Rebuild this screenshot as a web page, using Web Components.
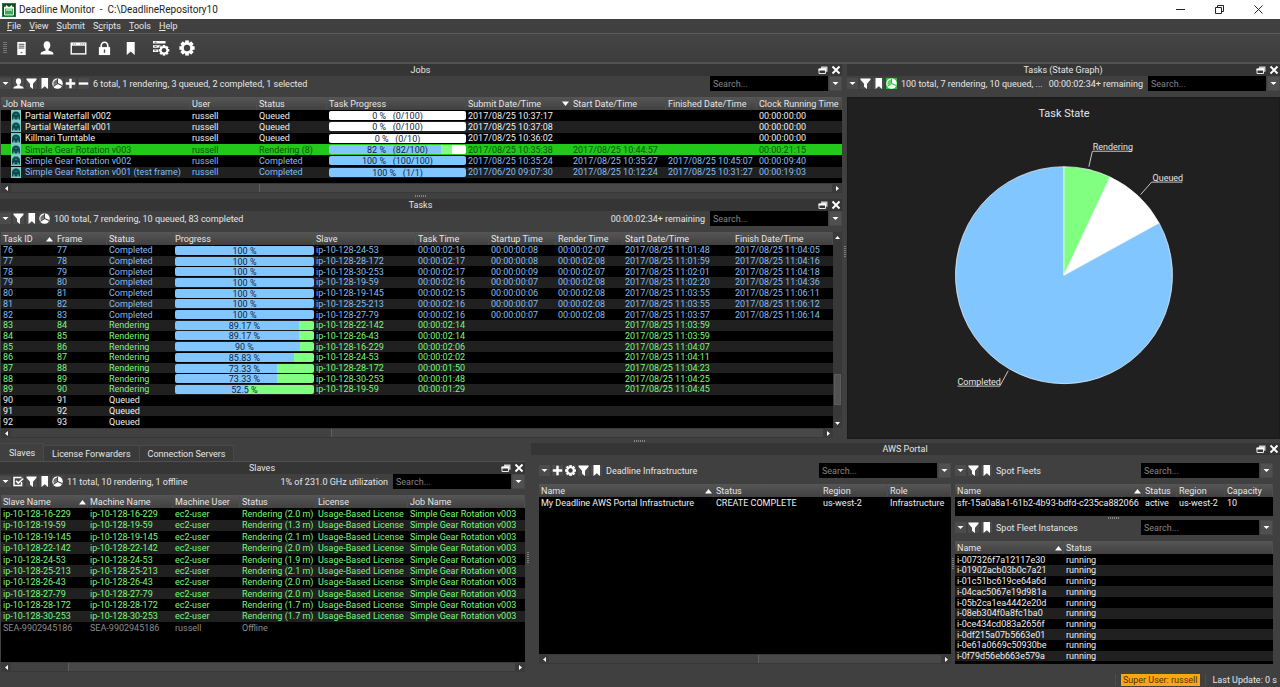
<!DOCTYPE html>
<html lang="en">
<head>
<meta charset="utf-8">
<title>Deadline Monitor</title>
<style>
  html, body { margin: 0; height: 100%; }
  body { background: #404040; color: #e6e6e6; font: 9px/10px Roboto, "Liberation Sans", sans-serif; }
</style>
</head>
<body>
<monitor-app></monitor-app>
<script>
const BASE = `
  * { box-sizing: border-box; }
  button { all: unset; box-sizing: border-box; display: inline-flex; align-items: center; justify-content: center; cursor: default; }
  svg { display: block; }
`;

const gear = (cx, cy, r, hole) => {
  let teeth = '';
  for (let a = 0; a < 360; a += 45) {
    teeth += `<rect x="${cx - r * 0.24}" y="${cy - r}" width="${r * 0.48}" height="${r}" transform="rotate(${a} ${cx} ${cy})"/>`;
  }
  return `${teeth}<circle cx="${cx}" cy="${cy}" r="${r * 0.8}"/><circle cx="${cx}" cy="${cy}" r="${hole}" fill="#404040"/>`;
};

const ICONS = {
  down: ['0 0 11 11', '<path d="M2.500 4h6L5.500 7z"/>'],
  user: ['0 0 14 14', '<ellipse cx="7" cy="4.200" rx="3.300" ry="4"/><path d="M5.500 7h3v2.500l4 1.500q1 .6 1 2.500h-13q0-1.900 1-2.500l4-1.500z"/>'],
  funnel: ['0 0 11 11', '<path d="M.5.500h10v1.300L7 5.800V11L4 8.800v-3L.5 1.800z"/>'],
  bookmark: ['0 0 11 11', '<path d="M2.500 0h6.500v11L5.800 8.200 2.500 11z"/>'],
  pie: ['0 0 11 11', '<circle cx="5.500" cy="5.500" r="5.200"/><path d="M5.500.6V5.500L10 7.600M5.500 5.500L1.400 8.400" stroke="var(--cut,#404040)" stroke-width="1.100" fill="none"/><path d="M5 1.400V5L1.900 7.300A4 4 0 0 1 5 1.400z" fill="var(--cut,#404040)" opacity=".75"/>'],
  plus: ['0 0 11 11', '<path d="M4.300.8h2.400v3.500h3.500v2.400H6.700v3.500H4.300V6.700H.8V4.300h3.500z"/>'],
  minus: ['0 0 11 11', '<path d="M.8 4.400h9.400v2.300H.8z"/>'],
  gear: ['0 0 11 11', gear(5.5, 5.5, 5.4, 2.2)],
  check: ['0 0 11 11', '<path d="M8.500 6v3.500h-7.500v-8h7.500" fill="none" stroke="#fff" stroke-width="1.500"/><path d="M3 4.800l2.200 2.300 5-4.600" fill="none" stroke="#fff" stroke-width="1.600"/>'],
  float: ['0 0 10 10', '<path d="M3 1.500h6.500v5.200H8V4H3z" fill="#ccc"/><path d="M1 4.200h6.500v4.300H1z" fill="none" stroke="#e8e8e8"/><path d="M.5 3.500h7.500v2H.5z"/>'],
  close: ['0 0 10 10', '<path d="M1.500 1.500l7 7m0-7l-7 7" stroke="#fff" stroke-width="1.900" fill="none"/>'],
  server: ['0 0 16 16', '<path d="M3.500 1h9v14h-9z"/><path d="M5 3.500h6M5 5.500h6M5 7.500h6" stroke="#444" fill="none"/><path d="M7 12h2v1H7z" fill="#444"/>'],
  window: ['0 0 18 16', '<path d="M.5 1.500h17v13H.5z"/><path d="M2 5h14v8H2z" fill="#404040"/><path d="M11 3.200h1M13 3.200h1M15 3.200h1M3 3.200h1M5 3.200h1" stroke="#444" stroke-width="1"/>'],
  lock: ['0 0 16 16', '<path d="M4.500 7V5a3.500 3.700 0 0 1 7 0v2" fill="none" stroke="#fff" stroke-width="1.800"/><path d="M2 6.500h12V15H2z"/><path d="M7.300 9h1.400v3.500H7.300z" fill="#444"/>'],
  mark: ['0 0 16 16', '<path d="M4 1h8.500v14L8.200 11.200 4 15z"/>'],
  config: ['0 0 18 16', `<path d="M1 1h12.500v2.600H1zM1 5.200h10v2.600H1zM1 9.400h6v2.600H1z"/><path d="M2.500 2.300h2M2.500 6.500h2M2.500 10.700h2" stroke="#444" stroke-width=".8"/><circle cx="12" cy="10.300" r="6" fill="#404040"/>${gear(12, 10.300, 5.300, 2.300)}`],
  cog: ['0 0 16 16', gear(8, 8, 7.6, 3.2)],
};
const icon = (name, w = 11, h = w) =>
  `<svg width="${w}" height="${h}" viewBox="${ICONS[name][0]}" fill="#fff" aria-hidden="true">${ICONS[name][1]}</svg>`;

function define(name, css, html, setup) {
  customElements.define(name, class extends HTMLElement {
    connectedCallback() {
      if (this.shadowRoot) return;
      const root = this.attachShadow({ mode: 'open' });
      const t = document.createElement('template');
      t.innerHTML = `<style>${BASE}${css}</style>` + (typeof html === 'function' ? html(this) : html);
      root.append(t.content.cloneNode(true));
      if (setup) setup(this, root);
    }
  });
}

/* ---------- window chrome ---------- */
define('title-bar', `
  :host { display: flex; align-items: center; height: 19px; padding: 0 2px; background: #fff; color: #222; font-size: 10px; }
  .name { margin-left: 3px; flex: 1; white-space: pre; line-height: 19px; }
  button { width: 39px; height: 19px; }
`, `
  <svg width="14" height="14" viewBox="0 0 14 14"><rect width="14" height="14" fill="#1f7a3c"/><rect x="1" y="1" width="12" height="12" fill="#0d4a22"/><path d="M2.500 5h9v7h-9z" fill="#3ea85b" stroke="#e9fff0"/><path d="M4 2.500L6 4.500M10 2.500L8 4.500M2 4.500h10" stroke="#e9fff0" stroke-width="1.300"/><path d="M4 6.500h6v1H4z" fill="#fff"/></svg>
  <span class="name">Deadline Monitor  -  C:\\DeadlineRepository10</span>
  <button aria-label="Minimize"><svg width="9" height="9" stroke="#222"><path d="M0 4.500h9"/></svg></button>
  <button aria-label="Restore"><svg width="9" height="9" fill="none" stroke="#222"><path d="M.5 2.500h6v6h-6zM2.500 2.500v-2h6v6h-2"/></svg></button>
  <button aria-label="Close"><svg width="9" height="9" stroke="#222"><path d="M.5.500l8 8m0-8l-8 8"/></svg></button>
`);

define('menu-bar', `
  :host { display: flex; align-items: center; gap: 8px; height: 15px; padding-left: 7px; border-bottom: 1px solid #5c5c5c; background: #404040; }
  u { text-underline-offset: 1px; }
`, ['File', 'View', 'Submit', 'Scripts', 'Tools', 'Help'].map(m => {
  const i = m === 'Scripts' ? 1 : 0;
  return `<button><span>${m.slice(0, i)}<u>${m[i]}</u>${m.slice(i + 1)}</span></button>`;
}).join(''));

define('main-tools', `
  :host { display: flex; align-items: center; height: 30px; padding-left: 3px; border-bottom: 2px solid #525252; background: linear-gradient(#444, #3d3d3d); }
  i { width: 4px; height: 12px; margin-right: 1px; background: repeating-linear-gradient(#777 0 1px, transparent 1px 2px); }
  button { width: 26px; height: 24px; }
  .gap { margin-left: 5px; }
`, `<i></i>
  <button aria-label="Repository">${icon('server', 15)}</button>
  <button aria-label="User">${icon('user', 14)}</button>
  <button class="gap" aria-label="Panels">${icon('window', 17, 15)}</button>
  <button aria-label="Super user">${icon('lock', 15)}</button>
  <button aria-label="Bookmark">${icon('mark', 15)}</button>
  <button class="gap" aria-label="Configure repository">${icon('config', 18, 16)}</button>
  <button aria-label="Options">${icon('cog', 16)}</button>
`);

/* ---------- docks ---------- */
define('dock-title', `
  :host { display: grid; grid-template-columns: 1fr auto 1fr; align-items: center; height: 12px; padding-right: 1px; background: #353535; }
  .btns { display: flex; gap: 3px; justify-content: flex-end; grid-column: 3; }
  span { grid-column: 2; }
`, `<span><slot></slot></span><div class="btns"><button aria-label="Float">${icon('float', 10)}</button><button aria-label="Close">${icon('close', 10)}</button></div>`);

define('panel-tools', `
  :host { display: flex; align-items: center; height: 15px; margin-bottom: 6px; white-space: nowrap; }
  .icons { display: flex; gap: 2px; margin-right: 4px; }
  .icons button { width: 11px; height: 11px; background: #4b4b4b; }
  .icons button.on { background: #2fbf3a; --cut: #2fbf3a; }
  .sum { flex: 1; min-width: 0; overflow: hidden; }
  .right { margin-right: 5px; }
  input { width: 118px; height: 15px; margin: 0 1px 0 0; padding: 0 3px; border: 0; border-radius: 0; background: #000; color: #e6e6e6; font: inherit; outline: none; }
  input::placeholder { color: #858585; opacity: 1; }
  .drop { width: 13px; height: 15px; background: #505050; border: 1px solid #484848; }
`, el => `
  <div class="icons">${el.getAttribute('icons').split(' ').map(n => {
    const on = n.endsWith('!'); n = n.replace('!', '');
    return `<button class="${on ? 'on' : ''}" aria-label="${n}">${icon(n)}</button>`;
  }).join('')}</div>
  <span class="sum"><slot></slot></span>
  <span class="right">${el.getAttribute('right') || ''}</span>
  <input type="text" placeholder="Search..." aria-label="Search">
  <button class="drop" aria-label="Search options">${icon('down')}</button>
`);

define('scroll-strip', `
  :host { display: flex; height: 10px; background: #444; }
  :host([vertical]) { flex-direction: column; width: 9px; height: auto; }
  button { flex: none; width: 10px; height: 10px; background: #3a3a3a; }
  :host([vertical]) button { width: 9px; }
  .track { flex: 1; display: flex; background: #484848; border: solid #383838; border-width: 1px 0; }
  :host([vertical]) .track { flex-direction: column; background: #383838; border-width: 0 1px; }
  .thumb { background: #414141; border-right: 1px solid #606060; }
  :host([vertical]) .thumb { background: #525252; border: 1px solid #5c5c5c; }
`, el => {
  const [a, b, c] = el.getAttribute('parts').split(' ');
  const v = el.hasAttribute('vertical');
  const tri = d => `<svg width="7" height="7" fill="#fff"><path d="${d}"/></svg>`;
  return `<button aria-label="Scroll back">${tri(v ? 'M1 5h5L3.500 2z' : 'M5 1v5L2 3.500z')}</button>
    <div class="track"><div style="flex:${a}"></div><div class="thumb" style="flex:${b}"></div><div style="flex:${c}"></div></div>
    <button aria-label="Scroll forward">${tri(v ? 'M1 2h5L3.500 5z' : 'M2 1v5L5 3.500z')}</button>`;
});

define('split-grip', `
  :host { display: flex; align-items: center; justify-content: center; }
  i { width: 12px; height: 2px; background: repeating-linear-gradient(90deg, #858585 0 1px, transparent 1px 2px); }
  :host([vertical]) i { width: 2px; height: 12px; background: repeating-linear-gradient(#7c7c7c 0 1px, transparent 1px 2px); }
`, '<i></i>');

/* ---------- data ---------- */
const bar = (text, stops) => ({ text, stops });
const B = '#82c6ff', G = '#80ff80', W = '#ffffff';
const gradient = (p, q = 100) => `linear-gradient(90deg, ${B} ${p}%, ${G} ${p}% ${q}%, ${W} ${q}%)`;

const T = {};
T.jobs = {
  cols: [['Job Name', 189], ['User', 67], ['Status', 70], ['Task Progress', 139], ['Submit Date/Time', 105, 'desc'], ['Start Date/Time', 95], ['Finished Date/Time', 91], ['Clock Running Time']],
  icon: true,
  rows: [
    ['q', 'Partial Waterfall v002', 'russell', 'Queued', bar('0 %   (0/100)', W), '2017/08/25 10:37:17', '', '', '00:00:00:00'],
    ['q', 'Partial Waterfall v001', 'russell', 'Queued', bar('0 %   (0/100)', W), '2017/08/25 10:37:08', '', '', '00:00:00:00'],
    ['q', 'Killmari Turntable', 'russell', 'Queued', bar('0 %   (0/10)', W), '2017/08/25 10:36:02', '', '', '00:00:00:00'],
    ['sel', 'Simple Gear Rotation v003', 'russell', 'Rendering (8)', bar('82 %   (82/100)', gradient(82, 90)), '2017/08/25 10:35:38', '2017/08/25 10:44:57', '', '00:00:21:15'],
    ['c', 'Simple Gear Rotation v002', 'russell', 'Completed', bar('100 %   (100/100)', B), '2017/08/25 10:35:24', '2017/08/25 10:35:27', '2017/08/25 10:45:07', '00:00:09:40'],
    ['c', 'Simple Gear Rotation v001 (test frame)', 'russell', 'Completed', bar('100 %   (1/1)', B), '2017/06/20 09:07:30', '2017/08/25 10:12:24', '2017/08/25 10:31:27', '00:00:19:03'],
  ],
};
const done = [
  ['24-53', '16', '08', '07', '01:48', '04:05'], ['28-172', '17', '08', '08', '01:59', '04:16'],
  ['30-253', '17', '09', '07', '02:01', '04:18'], ['19-59', '16', '07', '08', '02:20', '04:36'],
  ['19-145', '15', '06', '08', '03:55', '06:11'], ['25-213', '16', '07', '08', '03:55', '06:12'],
  ['27-79', '16', '07', '08', '03:57', '06:14'],
];
const live = [
  ['89.17', '22-142', '02:14', '03:59'], ['89.17', '26-43', '02:14', '03:59'], ['90', '16-229', '02:06', '04:07'],
  ['85.83', '24-53', '02:02', '04:11'], ['73.33', '28-172', '01:50', '04:23'], ['73.33', '30-253', '01:48', '04:25'],
  ['52.5', '19-59', '01:29', '04:45'],
];
T.tasks = {
  cols: [['Task ID', 54, 'asc'], ['Frame', 52], ['Status', 66], ['Progress', 141], ['Slave', 102], ['Task Time', 73], ['Startup Time', 67], ['Render Time', 67], ['Start Date/Time', 110], ['Finish Date/Time']],
  rows: [
    ...done.map((d, i) => ['c', 76 + i, 77 + i, 'Completed', bar('100 %', B), `ip-10-128-${d[0]}`, `00:00:02:${d[1]}`, `00:00:00:${d[2]}`, `00:00:02:${d[3]}`, `2017/08/25 11:${d[4]}`, `2017/08/25 11:${d[5]}`]),
    ...live.map((d, i) => ['r', 83 + i, 84 + i, 'Rendering', bar(`${d[0]} %`, gradient(d[0])), `ip-10-128-${d[1]}`, `00:00:${d[2]}`, '', '', `2017/08/25 11:${d[3]}`, '']),
    ...[90, 91, 92].map(n => ['q', n, n + 1, 'Queued', '', '', '', '', '', '', '']),
  ],
};
T.slaves = {
  cols: [['Slave Name', 87, 'asc'], ['Machine Name', 85], ['Machine User', 67], ['Status', 76], ['License', 92], ['Job Name']],
  rows: [
    ...[['16-229', '2.0'], ['19-59', '1.3'], ['19-145', '2.1'], ['22-142', '2.0'], ['24-53', '1.9'], ['25-213', '2.1'], ['26-43', '2.0'], ['27-79', '2.0'], ['28-172', '1.7'], ['30-253', '1.7']]
      .map(([n, m]) => ['r', `ip-10-128-${n}`, `ip-10-128-${n}`, 'ec2-user', `Rendering (${m} m)`, 'Usage-Based License', 'Simple Gear Rotation v003']),
    ['off', 'SEA-9902945186', 'SEA-9902945186', 'russell', 'Offline', '', ''],
  ],
};
T.infra = {
  cols: [['Name', 175, 'asc'], ['Status', 107], ['Region', 67], ['Role']],
  rows: [['q', 'My Deadline AWS Portal Infrastructure', 'CREATE COMPLETE', 'us-west-2', 'Infrastructure']],
};
T.fleets = {
  cols: [['Name', 188, 'asc'], ['Status', 34], ['Region', 48], ['Capacity']],
  rows: [['q', 'sfr-15a0a8a1-61b2-4b93-bdfd-c235ca882066', 'active', 'us-west-2', '10']],
};
T.instances = {
  cols: [['Name', 109, 'asc'], ['Status']],
  rows: ['007326f7a12117e30', '01902acb03b0c7a21', '01c51bc619ce64a6d', '04cac5067e19d981a', '05b2ca1ea4442e20d', '08eb304f0a8fc1ba0', '0ce434cd083a2656f', '0df215a07b5663e01', '0e61a0669c50930be', '0f79d56eb663e579a']
    .map(n => ['q', `i-${n}`, 'running']),
};

const jobIcon = '<svg width="10" height="11" viewBox="0 0 10 11"><rect width="10" height="11" fill="#7fcac6"/><path d="M1 9.500V6q0-4.500 4-4.500t4 4.500v3.500H7.500V7.500h-1v2h-3v-2h-1v2z" fill="#0c4a4e"/><path d="M3.500 3.500L5 5l1.500-1.500" stroke="#1f8a8a" fill="none"/></svg>';

define('data-table', `
  :host { display: block; background: #000; overflow: hidden; }
  table { width: 100%; height: var(--table-height, auto); table-layout: fixed; border-collapse: separate; border-spacing: 0; }
  th, td { padding: 0 0 0 2px; white-space: nowrap; text-align: left; font-weight: 400; vertical-align: middle; }
  th { height: 13px; background: linear-gradient(#565656, #404040); border-right: 1px solid #4e4e4e; }
  th div { display: flex; align-items: center; justify-content: space-between; }
  tr:nth-child(even) td { background: #202020; }
  .q { color: #f0f0f0; } .c { color: #82bdf0; } .r { color: #7cf57c; } .off { color: #8c8c8c; }
  tbody .sel td { color: #0b540b; background: #22c81a; }
  .job { display: flex; align-items: center; gap: 4px; height: 11px; padding-left: 8px; }
  .bar { height: 9px; border-radius: 2px; color: #12283a; text-align: center; line-height: 11px; white-space: pre; overflow: hidden; }
`, el => {
  const t = T[el.getAttribute('source')];
  const arrow = k => k ? `<svg width="8" height="6" fill="#fff"><path d="${k === 'asc' ? 'M0 5.500h7L3.500 1z' : 'M0 .5h7L3.500 5z'}"/></svg>` : '';
  const cell = (c, i) => c && c.stops ? `<td><div class="bar" style="background:${c.stops}">${c.text}</div></td>`
    : t.icon && i === 0 ? `<td><div class="job">${jobIcon}${c}</div></td>` : `<td>${c}</td>`;
  return `<table><colgroup>${t.cols.map(c => `<col${c[1] ? ` style="width:${c[1]}px"` : ''}>`).join('')}</colgroup>
    <thead><tr>${t.cols.map(c => `<th scope="col"><div>${c[0]}${arrow(c[2])}</div></th>`).join('')}</tr></thead>
    <tbody>${t.rows.map(([cls, ...cells]) => `<tr class="${cls}">${cells.map(cell).join('')}</tr>`).join('')}</tbody></table>`;
});

/* ---------- chart ---------- */
define('state-chart', `
  :host { display: flex; background: #202020; border: 1px solid #1a1a1a; min-height: 0; }
  svg { width: 100%; height: 100%; }
  text { fill: #e6e6e6; }
`, () => {
  const cx = 217, cy = 178, r = 109;
  const pt = p => [cx + r * Math.sin(p * 2 * Math.PI), cy - r * Math.cos(p * 2 * Math.PI)].map(n => n.toFixed(1)).join(' ');
  const slice = (a, b, f) => `<path d="M${cx} ${cy}L${pt(a)}A${r} ${r} 0 ${b - a > .5 ? 1 : 0} 1 ${pt(b)}z" fill="${f}" stroke="#f4faff" stroke-width=".7"/>`;
  return `<svg viewBox="0 0 433 342" role="img" aria-label="Task State">
    ${slice(.17, 1, B)}${slice(0, .07, G)}${slice(.07, .17, W)}
    <g fill="none" stroke="#c8c8c8" stroke-width="1">
      <path d="M242 69L245.500 53.500H285"/><path d="M294 97L305 84.500H336"/><path d="M161 274L152.500 289.500H110"/>
    </g>
    <text x="217" y="19" font-size="11" text-anchor="middle">Task State</text>
    <text x="246" y="52" font-size="9">Rendering</text>
    <text x="306" y="83" font-size="9">Queued</text>
    <text x="110" y="288" font-size="9">Completed</text>
  </svg>`;
});

define('tab-strip', `
  :host { display: flex; align-items: flex-end; height: 19px; padding-left: 1px; border-bottom: 1px solid #505050; }
  button { height: 16px; padding: 0 8px; border: 1px solid #4a4a4a; border-bottom: 0; border-left: 0; background: #3a3a3a; }
  button[aria-selected=true] { height: 18px; background: #404040; }
`, `<button role="tab" aria-selected="true">Slaves</button><button role="tab" aria-selected="false">License Forwarders</button><button role="tab" aria-selected="false">Connection Servers</button>`);

define('status-bar', `
  :host { display: flex; align-items: center; justify-content: flex-end; height: 15px; padding-right: 3px; }
  .user { height: 12px; line-height: 12px; padding: 0 2px; background: #ffa511; color: #4d3200; }
  .sep { width: 1px; height: 12px; margin: 0 5px; background: #4e4e4e; }
  .time { margin-left: 2px; }
`, `<span class="sep"></span><span class="user">Super User: russell</span><span class="sep"></span><span class="time">Last Update: 0 s</span>`);

/* ---------- application layout ---------- */
define('monitor-app', `
  :host { display: flex; flex-direction: column; min-height: 100vh; }
  .top { display: grid; grid-template-columns: minmax(0, 842fr) 5px minmax(0, 433fr); }
  .bottom { flex: 1; display: grid; grid-template-columns: minmax(0, 525fr) 6px minmax(0, 749fr); }
  .col { display: flex; flex-direction: column; min-width: 0; }
  .fill { flex: 1; }
  .inset { margin-left: 1px; }
  .jobs { --table-height: 81px; padding-bottom: 5px; }
  .tasks { --table-height: 195px; padding-bottom: 1px; flex: 1; min-width: 0; }
  .slaves { --table-height: 138px; }
  .single { --table-height: 24px; }
  .fleets { padding-bottom: 8px; }
  .instances { --table-height: 120px; }
  .row { display: flex; }
  .under { margin-right: 9px; }
  .grip { height: 6px; }
  .main-grip { height: 4px; }
  .aws { flex: 1; display: grid; grid-template-columns: minmax(0, 412fr) 4px minmax(0, 318fr); padding: 8px 7px 8px 8px; }
`, `
  <title-bar></title-bar>
  <menu-bar></menu-bar>
  <main-tools></main-tools>
  <div class="top">
    <section class="col">
      <dock-title>Jobs</dock-title>
      <panel-tools icons="down user funnel bookmark pie plus minus">6 total, 1 rendering, 3 queued, 2 completed, 1 selected</panel-tools>
      <data-table class="jobs inset" source="jobs"></data-table>
      <scroll-strip class="inset" parts="0 248 573"></scroll-strip>
      <split-grip class="grip"></split-grip>
      <dock-title>Tasks</dock-title>
      <panel-tools icons="down funnel bookmark pie" right="00:00:02:34+ remaining">100 total, 7 rendering, 10 queued, 83 completed</panel-tools>
      <div class="row inset">
        <data-table class="tasks" source="tasks"></data-table>
        <scroll-strip vertical parts="134 29 13"></scroll-strip>
      </div>
      <scroll-strip class="inset under" parts="0 320 492"></scroll-strip>
    </section>
    <split-grip vertical></split-grip>
    <section class="col">
      <dock-title>Tasks (State Graph)</dock-title>
      <panel-tools icons="down funnel bookmark pie!" right="00:00:02:34+ remaining">100 total, 7 rendering, 10 queued, ...</panel-tools>
      <state-chart class="fill"></state-chart>
    </section>
  </div>
  <split-grip class="main-grip"></split-grip>
  <div class="bottom">
    <section class="col">
      <tab-strip></tab-strip>
      <dock-title>Slaves</dock-title>
      <panel-tools icons="down check funnel bookmark pie" right="1% of 231.0 GHz utilization">11 total, 10 rendering, 1 offline</panel-tools>
      <data-table class="slaves fill inset" source="slaves"></data-table>
      <scroll-strip class="inset" parts="0 57 447"></scroll-strip>
    </section>
    <split-grip vertical></split-grip>
    <section class="col">
      <dock-title>AWS Portal</dock-title>
      <div class="aws">
        <section class="col">
          <panel-tools icons="down plus gear funnel bookmark">Deadline Infrastructure</panel-tools>
          <data-table class="single fill" source="infra"></data-table>
          <scroll-strip parts="0 210 182"></scroll-strip>
        </section>
        <split-grip vertical></split-grip>
        <section class="col">
          <panel-tools icons="down funnel bookmark">Spot Fleets</panel-tools>
          <data-table class="single fleets" source="fleets"></data-table>
          <split-grip class="main-grip"></split-grip>
          <panel-tools icons="down funnel bookmark">Spot Fleet Instances</panel-tools>
          <data-table class="instances fill" source="instances"></data-table>
        </section>
      </div>
    </section>
  </div>
  <status-bar></status-bar>
`);
</script>
</body>
</html>
